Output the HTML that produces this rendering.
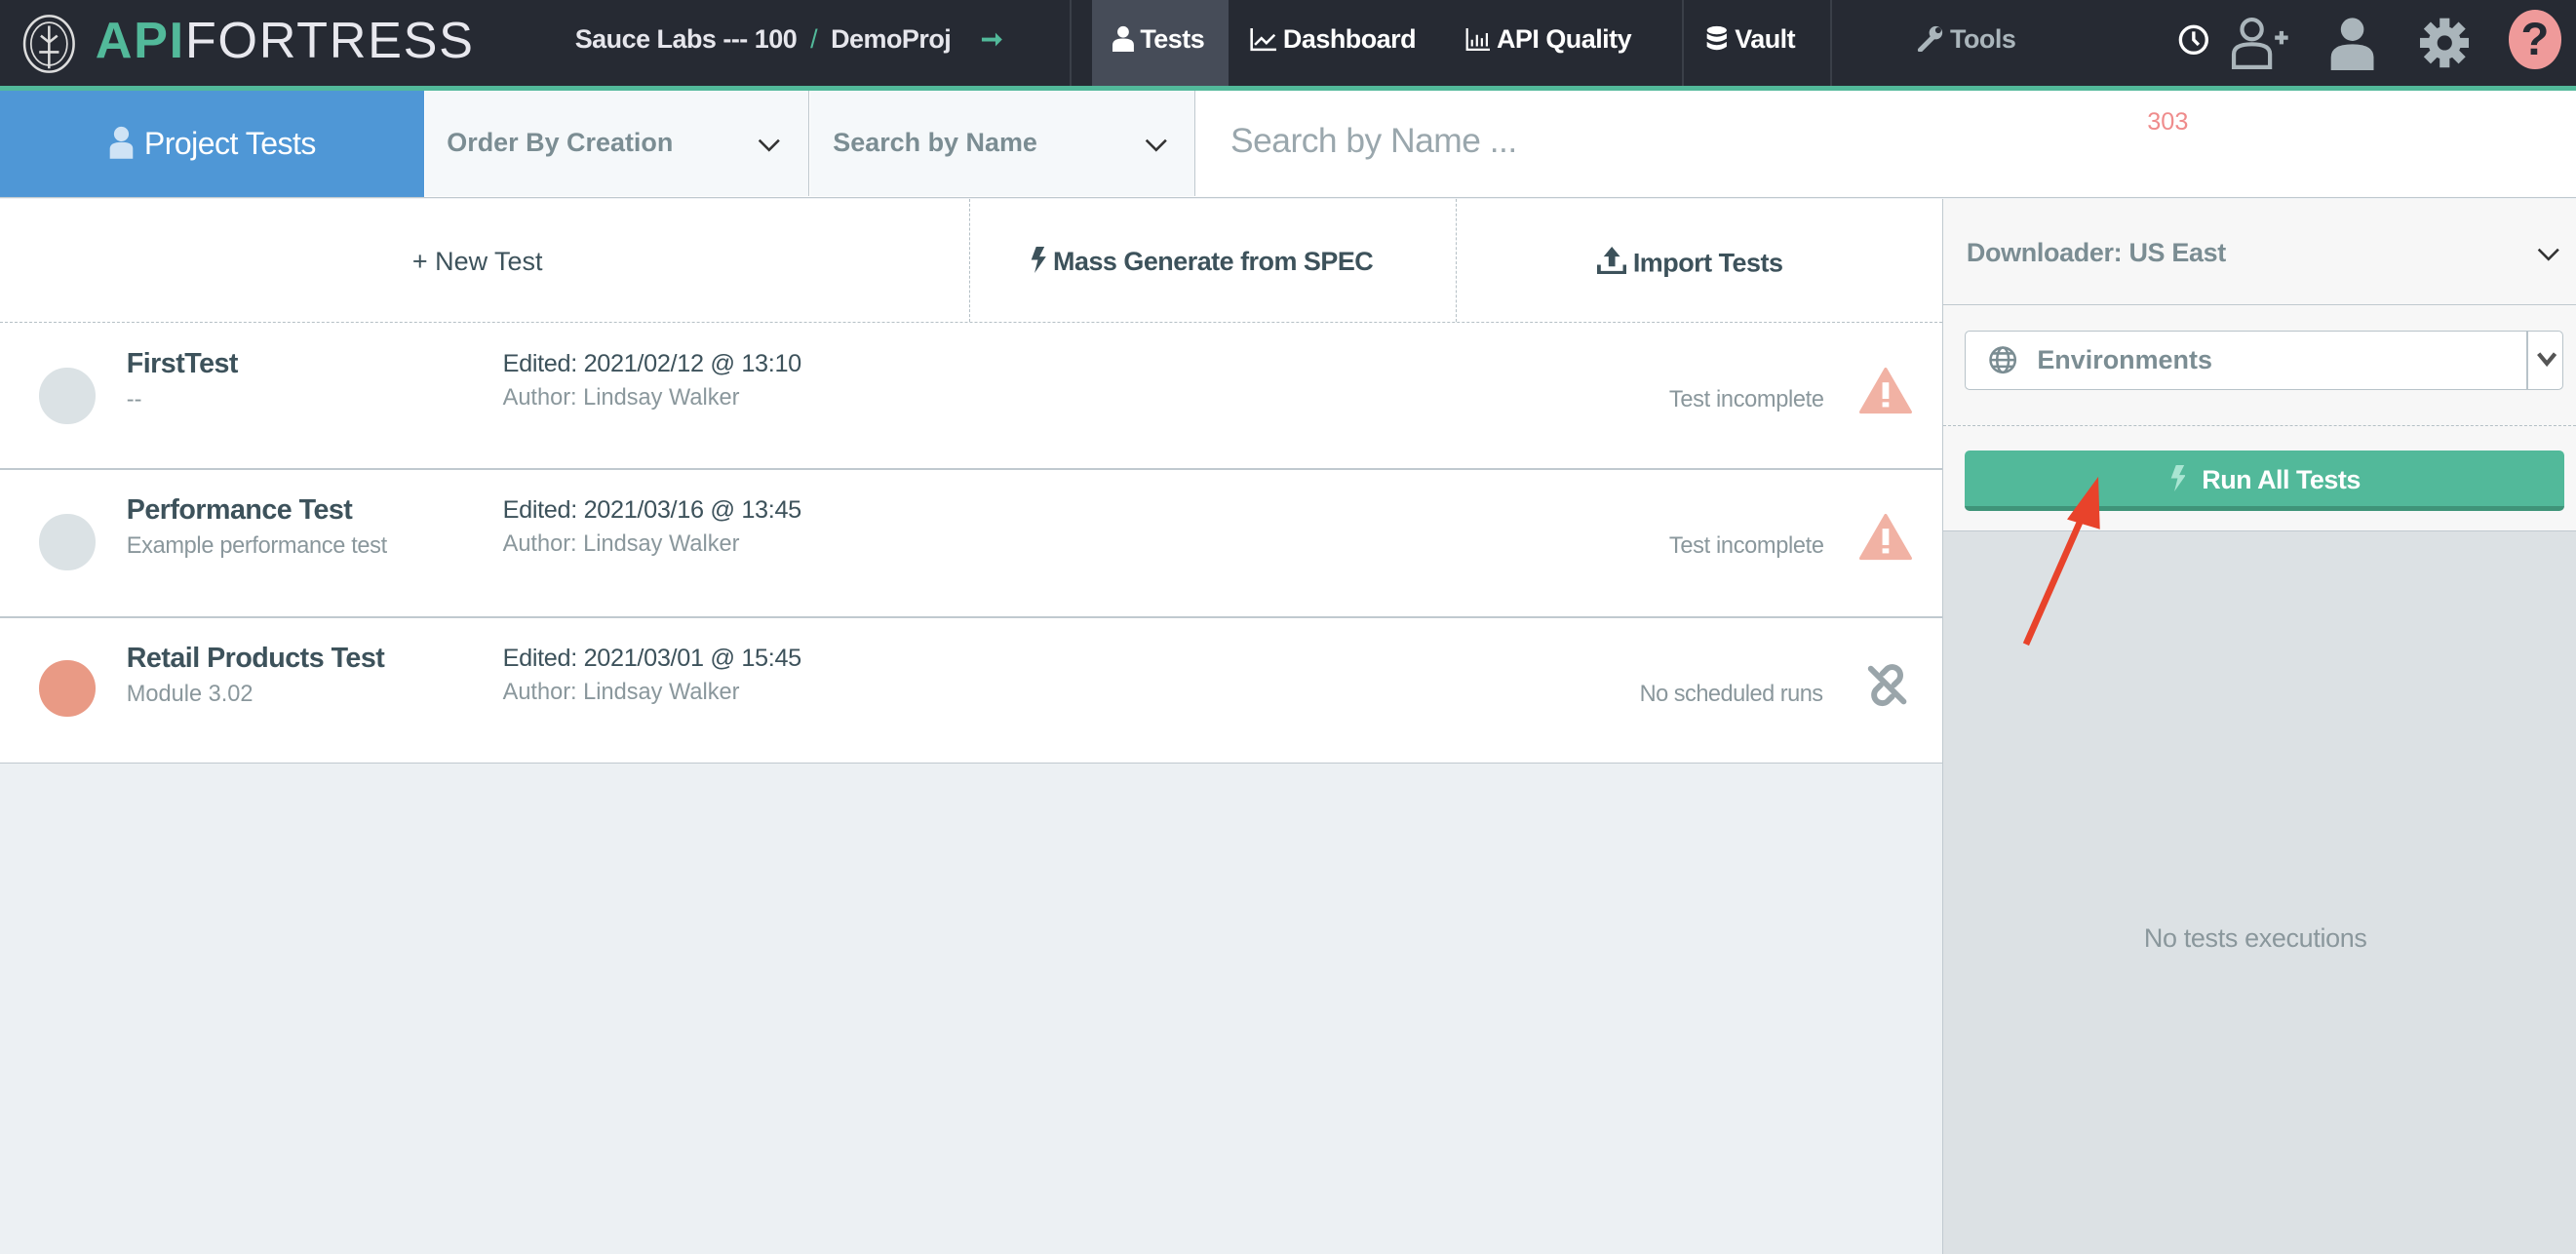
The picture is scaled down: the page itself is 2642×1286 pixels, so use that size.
<!DOCTYPE html>
<html><head><meta charset="utf-8"><style>
html,body{margin:0;padding:0;}
body{width:1568px;height:763px;zoom:1.68495;overflow:hidden;font-family:"Liberation Sans",sans-serif;background:#ecf0f3;position:relative;}
.a{position:absolute;}
.hdr{left:0;top:0;width:1568px;height:52px;background:#262a33;}
.gl{left:0;top:52px;width:1568px;height:3px;background:#52b99a;}
.nav{color:#fff;font-weight:bold;font-size:16px;top:15px;letter-spacing:-0.3px}
.t{white-space:nowrap;}
svg.i{vertical-align:-2px;margin-right:4px}
</style></head><body>
<div class="a hdr"></div><div class="a gl"></div>
<svg class="a" style="left:12px;top:8px" width="36" height="38" viewBox="0 0 36 38"><ellipse cx="18" cy="19" rx="15" ry="17" fill="none" stroke="#ddd" stroke-width="1.5"/><ellipse cx="18" cy="19" rx="11" ry="13" fill="none" stroke="#ddd" stroke-width="1"/><path d="M18 8v26M13 14l5 4 5-4M12 24h12" stroke="#ddd" stroke-width="1.5" fill="none"/></svg>
<div class="a t" style="left:58px;top:7px;font-size:31px;letter-spacing:1px;color:#52b99a;font-weight:bold">API<span style="color:#e8e8ee;font-weight:normal">FORTRESS</span></div>
<div class="a t nav" style="left:350px;color:#e6e6ec">Sauce Labs --- 100 <span style="color:#52b99a;font-weight:normal">&nbsp;/&nbsp;</span> DemoProj <span style="color:#52b99a;margin-left:14px">➞</span></div>
<div class="a" style="left:651px;top:0;width:1px;height:52px;background:#3a3f48"></div>
<div class="a" style="left:665px;top:0;width:83px;height:52px;background:#464c58"></div>
<div class="a t nav" style="left:677px"><svg class="i" width="13" height="16"><circle cx="6.5" cy="4" r="3.5" fill="#fff"/><path d="M0 16v-4q0-4 6.5-4t6.5 4v4z" fill="#fff"/></svg>Tests</div>
<div class="a t nav" style="left:761px"><svg class="i" width="16" height="14"><path d="M1 0v13h15" stroke="#fff" stroke-width="1.5" fill="none"/><path d="M3 10l4-4 3 3 5-5" stroke="#fff" stroke-width="1.5" fill="none"/></svg>Dashboard</div>
<div class="a t nav" style="left:892px"><svg class="i" width="15" height="14"><path d="M1 0v13h14M4 11v-4M7 11v-7M10 11v-5M13 11v-8" stroke="#fff" stroke-width="1.3" fill="none"/></svg>API Quality</div>
<div class="a" style="left:1024px;top:0;width:1px;height:52px;background:#3a3f48"></div>
<div class="a t nav" style="left:1038px"><svg class="i" width="14" height="16"><ellipse cx="7" cy="3" rx="6" ry="2.5" fill="#fff"/><path d="M1 5q6 4 12 0v3q-6 4-12 0zM1 10q6 4 12 0v3q-6 4-12 0z" fill="#fff"/></svg>Vault</div>
<div class="a" style="left:1114px;top:0;width:1px;height:52px;background:#3a3f48"></div>
<div class="a t nav" style="left:1167px;color:#aab5bb"><svg class="i" width="16" height="16"><path d="M2 15l8-8" stroke="#aab5bb" stroke-width="3" stroke-linecap="round"/><circle cx="11.5" cy="4.5" r="4" fill="#aab5bb"/><circle cx="13" cy="3" r="1.8" fill="#262a33"/></svg>Tools</div>
<svg class="a" style="left:1325px;top:14px" width="20" height="20"><circle cx="10" cy="10" r="8" fill="none" stroke="#fff" stroke-width="2"/><path d="M10 5v5l3 3" stroke="#fff" stroke-width="2" fill="none"/></svg>
<svg class="a" style="left:1357px;top:9px" width="38" height="34"><circle cx="14" cy="9" r="6" fill="none" stroke="#aab5bb" stroke-width="2.5"/><path d="M3 32v-8q0-6 11-6t11 6v8z" fill="none" stroke="#aab5bb" stroke-width="2.5"/><path d="M28 14h8M32 10v8" stroke="#aab5bb" stroke-width="2.5"/></svg>
<svg class="a" style="left:1418px;top:9px" width="28" height="34"><circle cx="14" cy="9" r="7" fill="#aab5bb"/><path d="M1 34v-8q0-8 13-8t13 8v8z" fill="#aab5bb"/></svg>
<svg class="a" style="left:1473px;top:10px" width="30" height="32" viewBox="0 0 30 32"><g fill="#aab5bb"><circle cx="15" cy="16" r="10"/><rect x="12" y="1" width="6" height="30"/><rect x="0" y="13" width="30" height="6"/><rect x="12" y="1" width="6" height="30" transform="rotate(45 15 16)"/><rect x="12" y="1" width="6" height="30" transform="rotate(-45 15 16)"/></g><circle cx="15" cy="16" r="4.5" fill="#262a33"/></svg>
<div class="a" style="left:1527px;top:6px;width:32px;height:36px;border-radius:50%;background:#ef9a9a;color:#262a33;font-weight:bold;font-size:28px;text-align:center;line-height:36px">?</div>

<div class="a" style="left:0;top:55px;width:1568px;height:65px;background:#fff;border-bottom:1px solid #c0c9cf"></div>
<div class="a t" style="left:0;top:55px;width:258px;height:65px;background:#4f97d6;color:#fff;font-size:19px;line-height:65px;text-align:center;letter-spacing:-0.3px"><svg class="i" width="16" height="20" style="vertical-align:-3px;margin-right:6px"><circle cx="8" cy="5" r="4.5" fill="#cfe3f5"/><path d="M1 20v-6q0-4 7-4t7 4v6z" fill="#cfe3f5"/></svg>Project Tests</div>
<div class="a" style="left:259px;top:55px;width:233px;height:64px;background:#f5f8fa;border-right:1px solid #c0c9cf"></div>
<div class="a t" style="left:272px;top:78px;font-size:16px;font-weight:bold;color:#7b8d93">Order By Creation</div>
<svg class="a" style="left:461px;top:84px" width="14" height="9"><path d="M1 1l6 6 6-6" stroke="#333" stroke-width="1.5" fill="none"/></svg>
<div class="a" style="left:493px;top:55px;width:234px;height:64px;background:#f5f8fa;border-right:1px solid #c0c9cf"></div>
<div class="a t" style="left:507px;top:78px;font-size:16px;font-weight:bold;color:#7b8d93">Search by Name</div>
<svg class="a" style="left:697px;top:84px" width="14" height="9"><path d="M1 1l6 6 6-6" stroke="#333" stroke-width="1.5" fill="none"/></svg>
<div class="a t" style="left:749px;top:74px;font-size:21px;color:#9aa7ad;letter-spacing:-0.3px">Search by Name ...</div>
<div class="a t" style="left:1307px;top:66px;font-size:15px;color:#ef8c8c">303</div>

<div class="a" style="left:0;top:121px;width:1182px;height:343px;background:#fff;border-bottom:1px solid #c0c9cf"></div>
<div class="a" style="left:1182px;top:121px;width:1px;height:642px;background:#c0c9cf"></div>
<div class="a" style="left:0;top:196px;width:1182px;border-top:1px dashed #b5c0c6"></div>
<div class="a" style="left:590px;top:121px;height:75px;border-left:1px dashed #b5c0c6"></div>
<div class="a" style="left:886px;top:121px;height:75px;border-left:1px dashed #b5c0c6"></div>
<div class="a t" style="left:251px;top:150px;font-size:16px;color:#3d525b">+ New Test</div>
<div class="a t" style="left:627px;top:150px;font-size:16px;font-weight:bold;color:#3d525b;letter-spacing:-0.3px"><svg class="i" width="10" height="16"><path d="M4 0h5l-3 6h4L3 16l2-8H1z" fill="#3d525b"/></svg>Mass Generate from SPEC</div>
<div class="a t" style="left:972px;top:150px;font-size:16px;font-weight:bold;color:#3d525b;letter-spacing:-0.3px"><svg class="i" width="18" height="17"><path d="M9 0l5 6h-3v6H7V6H4z" fill="#3d525b"/><path d="M1 11v5h16v-5" stroke="#3d525b" stroke-width="2.5" fill="none"/></svg>Import Tests</div>

<div class="a" style="left:0;top:285px;width:1182px;height:1px;background:#c0c9cf"></div>
<div class="a" style="left:0;top:375px;width:1182px;height:1px;background:#c0c9cf"></div>

<div class="a" style="left:24px;top:224px;width:34px;height:34px;border-radius:50%;background:#dbe2e5"></div>
<div class="a t" style="left:77px;top:212px;font-size:17px;font-weight:bold;color:#3d525b;letter-spacing:-0.3px">FirstTest</div>
<div class="a t" style="left:77px;top:235px;font-size:14px;color:#8a979c">--</div>
<div class="a t" style="left:306px;top:213px;font-size:15px;color:#3d525b;letter-spacing:-0.2px">Edited: 2021/02/12 @ 13:10</div>
<div class="a t" style="left:306px;top:234px;font-size:14px;color:#8a979c">Author: Lindsay Walker</div>
<div class="a t" style="left:1016px;top:235px;font-size:14px;color:#8a979c;letter-spacing:-0.2px">Test incomplete</div>
<svg class="a" style="left:1132px;top:224px" width="32" height="28"><path d="M16 1L31 27H1z" fill="#f1b2a4" stroke="#f1b2a4" stroke-linejoin="round" stroke-width="2"/><rect x="14" y="9" width="4" height="10" fill="#fff"/><rect x="14" y="21" width="4" height="3" fill="#fff"/></svg>

<div class="a" style="left:24px;top:313px;width:34px;height:34px;border-radius:50%;background:#dbe2e5"></div>
<div class="a t" style="left:77px;top:301px;font-size:17px;font-weight:bold;color:#3d525b;letter-spacing:-0.3px">Performance Test</div>
<div class="a t" style="left:77px;top:324px;font-size:14px;color:#8a979c;letter-spacing:-0.2px">Example performance test</div>
<div class="a t" style="left:306px;top:302px;font-size:15px;color:#3d525b;letter-spacing:-0.2px">Edited: 2021/03/16 @ 13:45</div>
<div class="a t" style="left:306px;top:323px;font-size:14px;color:#8a979c">Author: Lindsay Walker</div>
<div class="a t" style="left:1016px;top:324px;font-size:14px;color:#8a979c;letter-spacing:-0.2px">Test incomplete</div>
<svg class="a" style="left:1132px;top:313px" width="32" height="28"><path d="M16 1L31 27H1z" fill="#f1b2a4" stroke="#f1b2a4" stroke-linejoin="round" stroke-width="2"/><rect x="14" y="9" width="4" height="10" fill="#fff"/><rect x="14" y="21" width="4" height="3" fill="#fff"/></svg>

<div class="a" style="left:24px;top:402px;width:34px;height:34px;border-radius:50%;background:#e99a85"></div>
<div class="a t" style="left:77px;top:391px;font-size:17px;font-weight:bold;color:#3d525b;letter-spacing:-0.3px">Retail Products Test</div>
<div class="a t" style="left:77px;top:414px;font-size:14px;color:#8a979c">Module 3.02</div>
<div class="a t" style="left:306px;top:392px;font-size:15px;color:#3d525b;letter-spacing:-0.2px">Edited: 2021/03/01 @ 15:45</div>
<div class="a t" style="left:306px;top:413px;font-size:14px;color:#8a979c">Author: Lindsay Walker</div>
<div class="a t" style="left:998px;top:414px;font-size:14px;color:#8a979c;letter-spacing:-0.3px">No scheduled runs</div>
<svg class="a" style="left:1135px;top:403px" width="28" height="28"><g fill="none" stroke="#9aa5aa" stroke-width="3.5" stroke-linecap="round"><path d="M11 7l3-3a5 5 0 0 1 7 7l-3 3"/><path d="M17 21l-3 3a5 5 0 0 1-7-7l3-3"/><path d="M4 4l20 20"/></g></svg>

<div class="a" style="left:1183px;top:121px;width:385px;height:642px;background:#dce1e4"></div>
<div class="a" style="left:1183px;top:121px;width:385px;height:202px;background:#f7f7f7;border-bottom:1px solid #c0c9cf"></div>
<div class="a" style="left:1183px;top:185px;width:385px;height:1px;background:#c0c9cf"></div>
<div class="a t" style="left:1197px;top:145px;font-size:16px;font-weight:bold;color:#7b8d93;letter-spacing:-0.2px">Downloader: US East</div>
<svg class="a" style="left:1544px;top:151px" width="14" height="9"><path d="M1 1l6 6 6-6" stroke="#333" stroke-width="1.5" fill="none"/></svg>
<div class="a" style="left:1196px;top:201px;width:363px;height:35px;background:#fff;border:1px solid #b8c3c9;border-radius:3px"></div>
<div class="a" style="left:1538px;top:202px;width:1px;height:35px;background:#b8c3c9"></div>
<svg class="a" style="left:1210px;top:210px" width="18" height="18"><g fill="none" stroke="#7b8d93" stroke-width="1.5"><circle cx="9" cy="9" r="7.5"/><ellipse cx="9" cy="9" rx="3.5" ry="7.5"/><path d="M1.5 9h15M3 5h12M3 13h12"/></g></svg>
<div class="a t" style="left:1240px;top:210px;font-size:16px;font-weight:bold;color:#7b8d93">Environments</div>
<svg class="a" style="left:1544px;top:214px" width="12" height="9"><path d="M1 1l5 6 5-6" stroke="#555" stroke-width="2.5" fill="none"/></svg>
<div class="a" style="left:1183px;top:259px;width:385px;border-top:1px dashed #b5c0c6"></div>
<div class="a t" style="left:1196px;top:274px;width:365px;height:34px;background:#52b99a;border-bottom:3px solid #3f9479;border-radius:3px;color:#fff;font-weight:bold;font-size:16px;text-align:center;line-height:36px;letter-spacing:-0.3px"><svg class="i" width="10" height="16" style="margin-right:10px"><path d="M4 0h5l-3 6h4L3 16l2-8H1z" fill="#a9e5d2"/></svg>Run All Tests</div>
<div class="a t" style="left:1305px;top:562px;font-size:16px;color:#8a979c;letter-spacing:-0.2px">No tests executions</div>
<svg class="a" style="left:1220px;top:280px" width="70" height="120"><path d="M13 112L50 28" stroke="#e8432b" stroke-width="4"/><path d="M57 10L38 36L58 42z" fill="#e8432b"/></svg>
</body></html>
